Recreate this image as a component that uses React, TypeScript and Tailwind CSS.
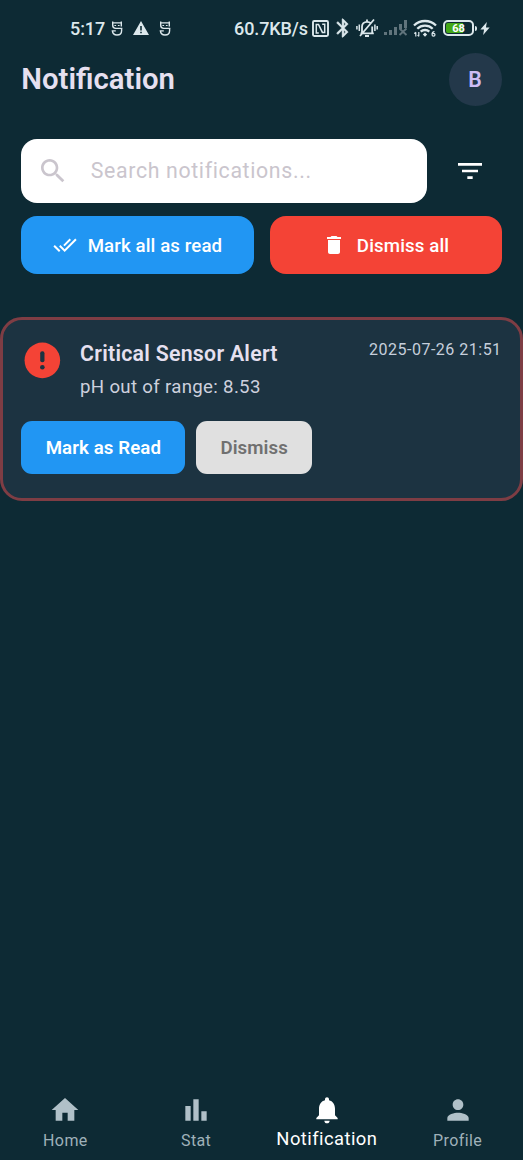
import React from "react";

type IconProps = { d: string; className: string };

function Icon({ d, className }: IconProps) {
  return (
    <svg viewBox="0 0 24 24" fill="currentColor" className={"shrink-0 " + className}>
      <path d={d} />
    </svg>
  );
}

const paths = {
  search:
    "M15.5 14h-.79l-.28-.27C15.41 12.59 16 11.11 16 9.5 16 5.91 13.09 3 9.5 3S3 5.91 3 9.5 5.91 16 9.5 16c1.61 0 3.09-.59 4.23-1.57l.27.28v.79l5 4.99L20.49 19l-4.99-5zm-6 0C7.01 14 5 11.99 5 9.5S7.01 5 9.5 5 14 7.01 14 9.5 11.99 14 9.5 14z",
  filter: "M10 18h4v-2h-4v2zM3 6v2h18V6H3zm3 7h12v-2H6v2z",
  doneAll:
    "M18 7l-1.41-1.41-6.34 6.34 1.41 1.41L18 7zm4.24-1.41L11.66 16.17 7.48 12l-1.41 1.41L11.66 19l12-12-1.42-1.41zM.41 13.41L6 19l1.41-1.41L1.83 12 .41 13.41z",
  trash: "M6 19c0 1.1.9 2 2 2h8c1.1 0 2-.9 2-2V7H6v12zM19 4h-3.5l-1-1h-5l-1 1H5v2h14V4z",
  home: "M10 20v-6h4v6h5v-8h3L12 3 2 12h3v8z",
  bars: "M4 9h4v11H4zm12 4h4v7h-4zm-6-9h4v16h-4z",
  bell: "M12 22c1.1 0 2-.9 2-2h-4c0 1.1.89 2 2 2zm6-6v-5c0-3.07-1.64-5.64-4.5-6.32V4c0-.83-.67-1.5-1.5-1.5s-1.5.67-1.5 1.5v.68C7.63 5.36 6 7.92 6 11v5l-2 2v1h16v-1l-2-2z",
  person:
    "M12 12c2.21 0 4-1.79 4-4s-1.79-4-4-4-4 1.79-4 4 1.79 4 4 4zm0 2c-2.67 0-8 1.34-8 4v2h16v-2c0-2.66-5.33-4-8-4z",
  bluetooth:
    "M17.71 7.71L12 2h-1v7.59L6.41 5 5 6.41 10.59 12 5 17.59 6.41 19 11 14.41V22h1l5.71-5.71-4.3-4.29 4.3-4.29zM13 5.83l1.88 1.88L13 9.59V5.83zm1.88 10.46L13 18.17v-3.76l1.88 1.88z",
};

function MaskIcon() {
  return (
    <svg viewBox="0 0 12 15" className="h-[15px] w-3 shrink-0" fill="none" stroke="currentColor" strokeWidth="1.4">
      <path d="M1.700.4v3.900c0 2 1 3.100 3 3.100h6.600M10.300.4v5.200M1.700 1.900h8.600" />
      <path d="M10.600 7.400v2.300c0 2.600-1.900 4.300-4.600 4.300-2.600 0-4.400-1.500-4.600-4.100h3.400" />
      <path d="M3.400 4.500h1.700M6.900 4.500h1.700" strokeWidth="1.200" />
    </svg>
  );
}

function StatusBar() {
  return (
    <div className="flex h-[53px] items-center pt-[3px] pl-[70px] text-[#dce8ec]">
      <span className="w-[35px] text-[18px] font-medium tracking-[-0.1px] whitespace-nowrap">5:17</span>
      <div className="ml-[6px] flex items-center">
        <MaskIcon />
        <svg viewBox="0 0 16 14" className="ml-[10px] h-[14px] w-4" fill="currentColor">
          <path fillRule="evenodd" d="M8 0 16 14H0ZM7.200 5v4.500h1.600V5ZM7.200 10.700v1.600h1.600v-1.600Z" />
        </svg>
        <span className="ml-[10px]">
          <MaskIcon />
        </span>
      </div>
      <span className="ml-[63px] w-[74px] text-[18px] font-medium tracking-[-0.1px] whitespace-nowrap">60.7KB/s</span>
      <svg viewBox="0 0 17 17" className="ml-[4px] size-[17px]" fill="none" stroke="currentColor" strokeWidth="1.900">
        <rect x="1" y="1" width="15" height="15" rx="1.200" />
        <path d="M6.800 13H4.300V4.400h2.200l4.100 8.100M10.200 4.200h2.500v8.400h-2.300L6.700 5" strokeWidth="1.500" />
      </svg>
      <Icon d={paths.bluetooth} className="ml-[3px] size-[22px] stroke-current stroke-[0.500]" />
      <svg viewBox="0 0 22 20" className="ml-[2px] h-5 w-[22px]" fill="none" stroke="currentColor" strokeWidth="1.800">
        <path d="M6 14.500V8.700C6 5.800 8 3.800 11 3.800c1.600 0 2.900.6 3.900 1.600M16.200 8.500v6M4.500 15.300h13.300M9 18h4M11 1.500v2M18 1.500 4 18" />
        <path d="M3.300 6.500v6.500M.9 8v3.500M18.900 6.500v6.500M21.200 8v3.500" strokeWidth="1.500" />
      </svg>
      <svg viewBox="0 0 24 16" className="ml-[6px] h-4 w-6 text-[#60747c]" fill="currentColor">
        <path d="M0 12h3v3H0ZM5 10h3v5H5ZM10 7h3v8h-3ZM15 4h3v5h-3ZM20 0h3v8h-3Z" />
        <path d="m15.500 8.500 7 6.500m0-6.500-7 6.500" fill="none" stroke="currentColor" strokeWidth="1.900" />
      </svg>
      <svg viewBox="0 0 24 18" className="ml-[5px] h-[18px] w-6" fill="none" stroke="currentColor" strokeWidth="2.300">
        <path d="M1 6.500c6-6 16-6 22 0M4.300 9.700c4.200-4.200 11.200-4.200 15.400 0M7.700 12.700c2.400-2.300 6.200-2.300 8.600 0" />
        <path d="M12 13.500 9.800 15.500 12 17.700l2.200-2.200Z" fill="currentColor" stroke="none" />
        <path d="M2.800 17.500v-4.300M5.800 13v4.300M1.300 14.600l1.500-1.500M4.600 16l1.200 1.500M21.500 12.500c-2 .2-2.500 1.500-2.500 2.900 0 1 .6 1.700 1.500 1.700s1.500-.6 1.500-1.400-.7-1.400-1.500-1.400-1.300.4-1.500 1" strokeWidth="1.200" />
      </svg>
      <div className="ml-[6px] flex h-4 w-[31px] shrink-0 items-center rounded-[5px] border-2 border-[#dce8ec] p-px">
        <div className="flex h-full w-full items-center justify-center rounded-[2px] bg-[linear-gradient(90deg,#43a818_68%,transparent_68%)] text-[11px] leading-none font-bold text-white">
          68
        </div>
      </div>
      <div className="ml-px h-[5px] w-[2px] rounded-r-sm bg-[#dce8ec]" />
      <svg viewBox="0 0 10 14" className="ml-[3px] h-[13px] w-[10px]" fill="currentColor">
        <path d="M7 0 0 8h4L3 14l7-8H6Z" />
      </svg>
    </div>
  );
}

const tabs = [
  { label: "Home", icon: paths.home },
  { label: "Stat", icon: paths.bars },
  { label: "Notification", icon: paths.bell, active: true },
  { label: "Profile", icon: paths.person },
];

export default function App() {
  return (
    <div className="flex h-[1160px] w-[523px] flex-col overflow-hidden bg-[#0d2a34] font-[Roboto,sans-serif]">
      <StatusBar />

      <header className="flex h-[53px] items-center justify-between pr-[21.500px] pl-[21.300px]">
        <h1 className="text-[29.300px] leading-none font-semibold whitespace-nowrap text-[#e6e0f0]">Notification</h1>
        <div className="flex size-[53px] items-center justify-center rounded-full bg-[#23384a] text-[21.300px] font-semibold text-[#cdbdf5]">
          B
        </div>
      </header>

      <div className="mt-[32.500px] flex items-center pl-[21.300px]">
        <div className="flex h-16 w-[405.500px] items-center rounded-[16px] bg-white pl-4">
          <Icon d={paths.search} className="size-8 text-[#cac5cd]" />
          <span className="ml-[21.500px] text-[21.300px] leading-[30px] tracking-[0.650px] whitespace-nowrap text-[#cac5cd]">
            Search notifications...
          </span>
        </div>
        <Icon d={paths.filter} className="ml-[27px] size-8 text-white" />
      </div>

      <div className="mt-[13.500px] flex gap-4 px-[21.400px] text-[18.670px] font-medium text-white">
        <button className="flex h-[58px] flex-1 items-center justify-center gap-[11px] rounded-[16px] bg-[#2196f3] whitespace-nowrap">
          <Icon d={paths.doneAll} className="size-6" />
          <span className="pt-[2px] tracking-[0.110px]">Mark all as read</span>
        </button>
        <button className="flex h-[58px] flex-1 items-center justify-center gap-[11px] rounded-[16px] bg-[#f44336] whitespace-nowrap">
          <Icon d={paths.trash} className="size-6" />
          <span className="pt-[2px] tracking-[0.130px]">Dismiss all</span>
        </button>
      </div>

      <section className="mt-[43px] h-[184px] rounded-[22px] border-3 border-[#7e3d44] bg-[#1c3341] px-[18.400px] pt-[18px]">
        <div className="flex items-start">
          <svg viewBox="0 0 24 24" className="mt-[0.500px] size-[42.700px] shrink-0">
            <circle cx="12" cy="12" r="10" fill="#f44336" />
            <rect x="10.800" y="6.900" width="2.400" height="6.200" rx="1.100" fill="#1c3341" />
            <circle cx="12" cy="15.900" r="1.300" fill="#1c3341" />
          </svg>
          <div className="ml-4 flex flex-col">
            <span className="text-[21.300px] leading-[32px] font-semibold tracking-[0.270px] whitespace-nowrap text-[#e6e0f0]">
              Critical Sensor Alert
            </span>
            <span className="mt-px text-[18.670px] leading-[32px] tracking-[0.310px] whitespace-nowrap text-[#cdd0dd]">
              pH out of range: 8.53
            </span>
          </div>
          <span className="mt-[1px] ml-auto text-[16px] leading-[22px] tracking-[0.500px] whitespace-nowrap text-[#c6cfdc]">
            2025-07-26 21:51
          </span>
        </div>
        <div className="mt-[18px] flex gap-[11px] text-[18.670px] font-semibold">
          <button className="h-[53px] w-[164px] rounded-[11px] bg-[#2196f3] pt-px tracking-[0.100px] whitespace-nowrap text-white">
            Mark as Read
          </button>
          <button className="h-[53px] w-[115.500px] rounded-[11px] bg-[#e0e0e0] pt-px tracking-[0.100px] whitespace-nowrap text-[#707070]">
            Dismiss
          </button>
        </div>
      </section>

      <nav className="mt-auto grid h-[66px] grid-cols-4">
        {tabs.map((t) => (
          <div
            key={t.label}
            className={"flex flex-col items-center whitespace-nowrap " + (t.active ? "text-white" : "text-[#b0c0c8]")}
          >
            <Icon d={t.icon} className="size-8" />
            <span
              className={
                t.active
                  ? "mt-[1px] text-[18.400px] leading-[24px] tracking-[0.440px]"
                  : "mt-[4px] text-[16px] leading-[22px] tracking-[0.400px] text-[#9fb1b9]"
              }
            >
              {t.label}
            </span>
          </div>
        ))}
      </nav>
    </div>
  );
}
